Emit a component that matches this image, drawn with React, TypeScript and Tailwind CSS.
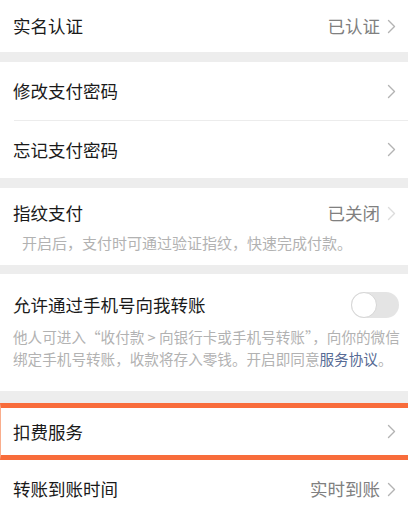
const font = { fontFamily: '"Noto Sans CJK SC", "Noto Sans", sans-serif' };

function Chevron({ faded = false }: { faded?: boolean }) {
  return (
    <svg width="9" height="15" viewBox="0 0 9 15" className="ml-[7px] shrink-0">
      <polyline
        points="1.5,1.5 7.5,7.5 1.5,13.5"
        fill="none"
        stroke={faded ? "#dcdcdc" : "#b3b3b3"}
        strokeWidth="1.4"
        strokeLinecap="round"
        strokeLinejoin="round"
      />
    </svg>
  );
}

function Row({
  label,
  value,
  height,
  faded,
}: {
  label: string;
  value?: string;
  height: string;
  faded?: boolean;
}) {
  return (
    <div className={`flex items-center justify-between bg-white pl-[13px] pr-[12px] ${height}`}>
      <span className="text-[17.5px] leading-[24px] text-[#1a1a1a]">{label}</span>
      <div className="flex items-center">
        {value && <span className="text-[17.5px] leading-[24px] text-[#808080]">{value}</span>}
        <Chevron faded={faded} />
      </div>
    </div>
  );
}

export default function App() {
  return (
    <div className="h-[507px] w-[408px] overflow-hidden bg-[#ededed]" style={font}>
      <Row label="实名认证" value="已认证" height="h-[52px]" />

      <div className="mt-[10px] bg-white">
        <Row label="修改支付密码" height="h-[58px]" />
        <div className="ml-[14px] h-px bg-[#ececec]" />
        <Row label="忘记支付密码" height="h-[57px]" />
      </div>

      <div className="mt-[10px] bg-white pb-[11px] pl-[13px] pr-[12px] pt-[13px]">
        <div className="flex items-center justify-between">
          <span className="text-[17.5px] leading-[24px] text-[#1a1a1a]">指纹支付</span>
          <div className="flex items-center">
            <span className="text-[17.5px] leading-[24px] text-[#808080]">已关闭</span>
            <Chevron faded />
          </div>
        </div>
        <p className="mt-[7px] pl-[9px] text-[15px] leading-[22px] text-[#b2b2b2]">
          开启后，支付时可通过验证指纹，快速完成付款。
        </p>
      </div>

      <div className="mt-[9px] bg-white pb-[21px] pl-[13px] pr-[9px] pt-[18px]">
        <div className="flex items-center justify-between">
          <span className="text-[17.5px] leading-[24px] text-[#1a1a1a]">允许通过手机号向我转账</span>
          <div className="relative h-[26px] w-[48px] rounded-full bg-[#e4e4e4]">
            <div className="absolute left-0 top-0 h-[26px] w-[26px] rounded-full border border-[#d6d6d6] bg-white" />
          </div>
        </div>
        <p className="mt-[8px] whitespace-nowrap text-[14.6px] leading-[22px] text-[#b2b2b2]">
          <span className="block">他人可进入“收付款 &gt; 向银行卡或手机号转账”，向你的微信</span>
          <span className="block">
            绑定手机号转账，收款将存入零钱。开启即同意<span className="text-[#576b95]">服务协议</span>。
          </span>
        </p>
      </div>

      <div className="mt-[12px] flex h-[57px] items-center justify-between border-b-[5px] border-l border-t-[5px] border-b-[#f86c3b] border-l-[#f9ad8c] border-t-[#f86c3b] bg-white pl-[12px] pr-[12px]">
        <span className="text-[17.5px] leading-[24px] text-[#1a1a1a]">扣费服务</span>
        <Chevron />
      </div>

      <Row label="转账到账时间" value="实时到账" height="h-[58px]" />
    </div>
  );
}
